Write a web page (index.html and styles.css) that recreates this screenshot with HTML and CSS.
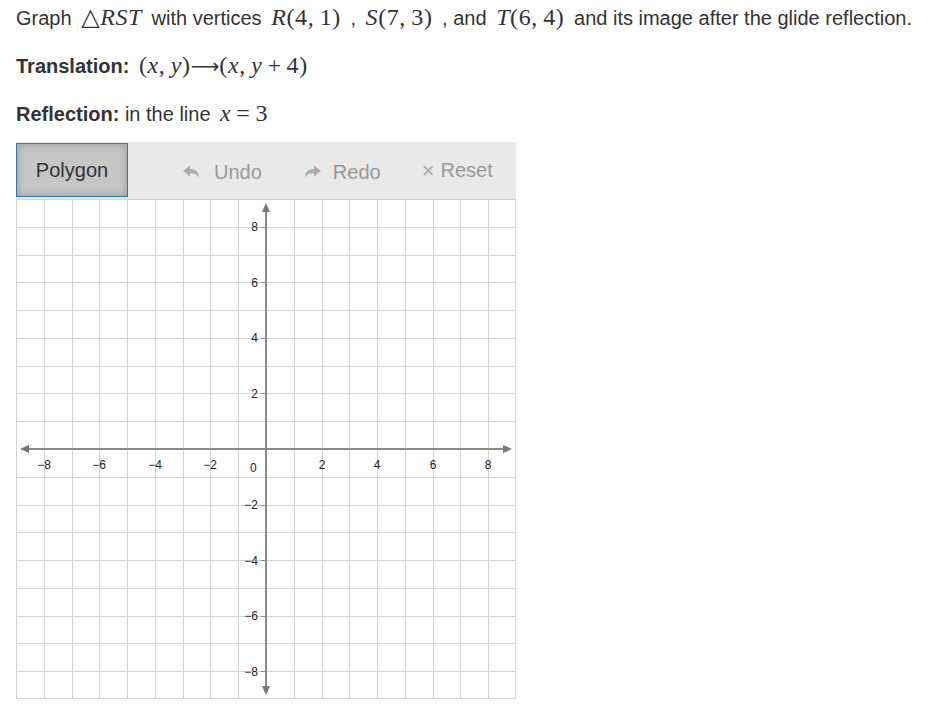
FILE: index.html
```html
<!DOCTYPE html>
<html lang="en">
<head>
  <meta charset="UTF-8" />
  <title>Glide Reflection</title>
  <link rel="stylesheet" href="styles.css">
</head>
<body>
  <div class="question">
    <p>Graph <span class="math">△<i>RST</i></span> with vertices <span class="math"><i>R</i>(4,&thinsp;1)</span> , <span class="math"><i>S</i>(7,&thinsp;3)</span> , and <span class="math"><i>T</i>(6,&thinsp;4)</span> and its image after the glide reflection.</p>
    <p><b>Translation:</b> <span class="math">(<i>x</i>,&thinsp;<i>y</i>)<span class="arrow-sym">⟶</span>(<i>x</i>,&thinsp;<i>y</i><span class="op">+</span>4)</span></p>
    <p><b>Reflection:</b> in the line <span class="math"><i>x</i><span class="op">=</span>3</span></p>
  </div>

  <div class="grapher">
    <div class="toolbar">
      <button class="tool active">Polygon</button>
      <button class="tool action undo">
        <svg width="16" height="14" viewBox="0 0 16 14"><path d="M0 6 L7 0.5 V4 C12.5 4 16 7 16 13 C14.5 9.5 11.5 8.2 7 8.2 V11.5 Z" fill="#aaa"/></svg>
        Undo
      </button>
      <button class="tool action redo">
        <svg width="16" height="14" viewBox="0 0 16 14"><path d="M16 6 L9 0.5 V4 C3.5 4 0 7 0 13 C1.5 9.5 4.5 8.2 9 8.2 V11.5 Z" fill="#aaa"/></svg>
        Redo
      </button>
      <button class="tool action reset"><span class="times">×</span> Reset</button>
    </div>

    <svg class="plane" width="500" height="500" viewBox="0 0 500 500">
      <path class="grid" d="M0.5 0V500 M28.5 0V500 M56.5 0V500 M83.5 0V500 M111.5 0V500 M139.5 0V500 M167.5 0V500 M194.5 0V500 M222.5 0V500 M278.5 0V500 M306.5 0V500 M333.5 0V500 M361.5 0V500 M389.5 0V500 M417.5 0V500 M444.5 0V500 M472.5 0V500 M499.5 0V500
        M0 0.5H500 M0 28.5H500 M0 56.5H500 M0 83.5H500 M0 111.5H500 M0 139.5H500 M0 167.5H500 M0 194.5H500 M0 222.5H500 M0 278.5H500 M0 306.5H500 M0 333.5H500 M0 361.5H500 M0 389.5H500 M0 417.5H500 M0 444.5H500 M0 472.5H500 M0 499.5H500"/>

      <!-- axes -->
      <path class="axis" d="M8 250H492 M250 8V492"/>
      <path class="arrow" d="M4 250L13 246V254Z M496 250L487 246V254Z M250 4L246 13H254Z M250 496L246 487H254Z"/>

      <!-- tick labels -->
      <g class="labels xlab">
        <text x="28" y="270">−8</text>
        <text x="83" y="270">−6</text>
        <text x="139" y="270">−4</text>
        <text x="194" y="270">−2</text>
        <text x="306" y="270">2</text>
        <text x="361" y="270">4</text>
        <text x="417" y="270">6</text>
        <text x="472" y="270">8</text>
      </g>
      <text class="labels" x="234" y="273">0</text>
      <g class="labels ylab">
        <text x="242" y="32">8</text>
        <text x="242" y="88">6</text>
        <text x="242" y="143">4</text>
        <text x="242" y="199">2</text>
        <text x="242" y="310">−2</text>
        <text x="242" y="366">−4</text>
        <text x="242" y="421">−6</text>
        <text x="242" y="477">−8</text>
      </g>
      <path class="tick" d="M245 28.5H250 M245 83.5H250 M245 139.5H250 M245 194.5H250 M245 306.5H250 M245 361.5H250 M245 417.5H250 M245 472.5H250"/>
    </svg>
  </div>
</body>
</html>
```

FILE: styles.css
```css
body {
  margin: 0;
  padding: 4px 16px 0;
  font-family: 'Liberation Sans', Arial, sans-serif;
  font-size: 20px;
  color: #333;
  background: #fff;
}

.question p {
  margin: 0 0 20px;
  height: 28px;
  line-height: 28px;
  white-space: nowrap;
}

.question p:last-child {
  margin-bottom: 0;
}

.question b {
  font-weight: bold;
}

.math {
  font-family: 'Liberation Serif', 'DejaVu Serif', serif;
  font-size: 24px;
  line-height: 20px;
  letter-spacing: 0.6px;
  margin: 0 4px;
}

.math i {
  font-style: italic;
}

.math .op {
  margin: 0 5px;
}

.arrow-sym {
  font-family: 'DejaVu Sans', sans-serif;
  font-size: 20px;
  letter-spacing: 0;
}

.grapher {
  width: 500px;
  margin-top: 14px;
}

.toolbar {
  display: flex;
  align-items: center;
  height: 57px;
  background-color: #e9e9e9;
}

.tool {
  font-family: 'Liberation Sans', Arial, sans-serif;
  font-size: 20px;
  border: none;
  background: none;
  padding: 0;
  color: #999;
  display: flex;
  align-items: center;
}

.tool.active {
  align-self: flex-start;
  margin-top: 1px;
  width: 112px;
  height: 54px;
  justify-content: center;
  color: #333;
  border: 1px solid #2a7ab8;
  background: #c6c6c6;
  box-shadow: inset 0 0 8px rgba(0,0,0,0.25);
}

.tool svg {
  margin-right: 15px;
}

.undo {
  margin-left: 55px;
  margin-top: 3px;
}

.redo {
  margin-left: 43px;
  margin-top: 3px;
}

.redo svg {
  margin-right: 12px;
}

.reset {
  margin-left: 41px;
}

.times {
  font-size: 22px;
  margin-right: 6px;
  color: #aaa;
}

.plane {
  display: block;
}

.grid {
  stroke: #d3d3d3;
  stroke-width: 1;
  fill: none;
}

.axis {
  stroke: #8a8a8a;
  stroke-width: 2;
  fill: none;
}

.arrow {
  fill: #777;
}

.tick {
  stroke: #8a8a8a;
  stroke-width: 1;
}

.labels {
  font-family: 'Liberation Sans', Arial, sans-serif;
  font-size: 12px;
  fill: #222;
}

.xlab text {
  text-anchor: middle;
}

.ylab text {
  text-anchor: end;
}
```
